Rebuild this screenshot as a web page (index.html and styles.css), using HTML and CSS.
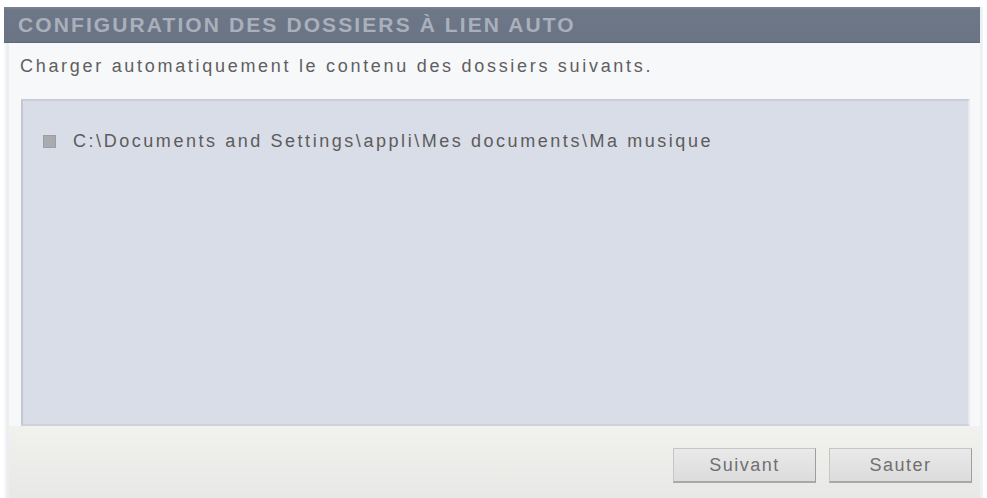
FILE: index.html
```html
<!DOCTYPE html>
<html lang="fr">
<head>
<meta charset="utf-8">
<title>Configuration des dossiers à lien auto</title>
<link rel="stylesheet" href="styles.css">
</head>
<body>
<div class="dialog">
  <div class="title">CONFIGURATION DES DOSSIERS À LIEN AUTO</div>
  <div class="body">
    <p class="intro">Charger automatiquement le contenu des dossiers suivants.</p>
    <div class="panel">
      <label class="item"><span class="check"></span><span class="path">C:\Documents and Settings\appli\Mes documents\Ma musique</span></label>
    </div>
  </div>
  <div class="footer">
    <button class="btn btn-next">Suivant</button>
    <button class="btn btn-skip">Sauter</button>
  </div>
</div>
</body>
</html>
```
FILE: styles.css
```css
html, body {
  margin: 0;
  padding: 0;
  background: #ffffff;
}
body {
  font-family: "Liberation Sans", Arial, sans-serif;
  width: 987px;
  height: 498px;
  overflow: hidden;
}
.dialog {
  margin: 7px 0 0 4px;
  width: 979px;
  display: flex;
  flex-direction: column;
  height: 491px;
  background: #f6f7f9;
  border-right: 3px solid #eef0f3;
  box-sizing: border-box;
}
.title {
  height: 36px;
  box-sizing: border-box;
  background: linear-gradient(#7b8494 0, #6d7787 3px, #6a7484 100%);
  border-bottom: 1px solid #5e6878;
  color: #a9b0bc;
  font-weight: bold;
  font-size: 21px;
  letter-spacing: 2.1px;
  line-height: 35px;
  padding-left: 14px;
  white-space: nowrap;
}
.body {
  display: flex;
  flex-direction: column;
  padding: 0 10px 0 12px;
  border-left: 3px solid #eceef1;
  margin-left: 2px;
  background: #f7f8fa;
}
.intro {
  margin: 13px 0 0 -1px;
  height: 43px;
  font-size: 18px;
  letter-spacing: 2.7px;
  color: #5f5f5f;
  white-space: nowrap;
}
.panel {
  height: 327px;
  box-sizing: border-box;
  background: #d9dde7;
  border-top: 2px solid #c9cdd7;
  border-left: 2px solid #c3c7d1;
  border-right: 2px solid #e9ebf0;
  border-bottom: 2px solid #cdd1db;
  padding: 30px 0 0 20px;
}
.item {
  display: flex;
  align-items: center;
  gap: 17px;
}
.check {
  width: 13px;
  height: 13px;
  background: #a9abb0;
  border: 1px solid #9c9ea3;
  box-sizing: border-box;
}
.path {
  font-size: 18px;
  letter-spacing: 2.55px;
  color: #5c5c5c;
  white-space: nowrap;
}
.footer {
  flex: 1;
  background: linear-gradient(#f1f2ee, #e8e8e6);
  border-left: 3px solid #eceef1;
  margin-left: 2px;
  display: flex;
  justify-content: flex-end;
  align-items: flex-start;
  gap: 13px;
  padding: 22px 8px 0 0;
}
.btn {
  width: 143px;
  height: 35px;
  font-family: "Liberation Sans", Arial, sans-serif;
  font-size: 18px;
  letter-spacing: 1.5px;
  color: #707070;
  background: linear-gradient(#e9e9e9, #dcdcdc);
  border: 1px solid #c6c6c6;
  border-right-color: #9e9e9e;
  border-bottom: 2px solid #a9a9a9;
  padding: 0;
}
```
